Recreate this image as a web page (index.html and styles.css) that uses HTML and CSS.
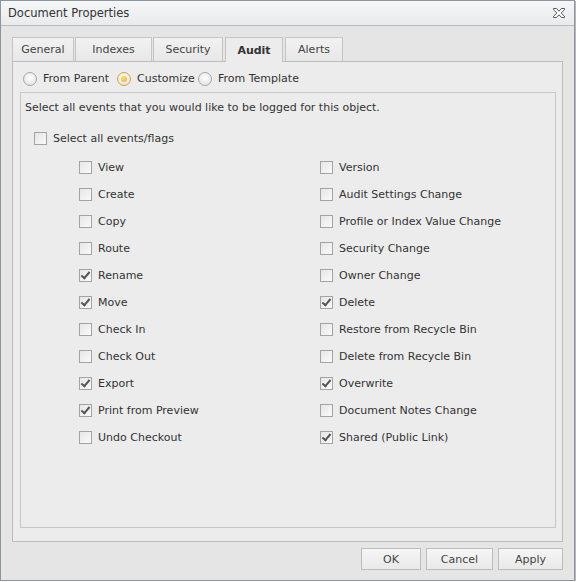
FILE: index.html
```html
<!DOCTYPE html>
<html>
<head>
<meta charset="utf-8">
<link rel="stylesheet" href="styles.css">
</head>
<body>
<div class="dialog">
  <div class="titlebar">
    <span class="title">Document Properties</span>
    <span class="close">
      <svg width="14" height="12" viewBox="0 0 14 12"><path d="M1.5 1.5h3l2.5 2.7 2.5-2.7h3v1.2l-3.4 3.3 3.4 3.3v1.2h-3L7 7.8 4.5 10.5h-3V9.3L4.9 6 1.5 2.7z" fill="#fff" stroke="#555" stroke-width="1"/></svg>
    </span>
  </div>
  <div class="body">
    <div class="tabs">
      <div class="tab t-general">General</div>
      <div class="tab t-indexes">Indexes</div>
      <div class="tab t-security">Security</div>
      <div class="tab t-audit active">Audit</div>
      <div class="tab t-alerts">Alerts</div>
    </div>
    <div class="panel">
      <div class="radios">
        <label class="radio r-parent"><span class="rb"></span>From Parent</label>
        <label class="radio r-custom"><span class="rb on"></span>Customize</label>
        <label class="radio"><span class="rb"></span>From Template</label>
      </div>
      <div class="box">
        <div class="intro">Select all events that you would like to be logged for this object.</div>
        <div class="selall"><span class="cb"></span>Select all events/flags</div>
        <div class="grid">
          <div class="item"><span class="cb"></span>View</div>
          <div class="item"><span class="cb"></span>Version</div>
          <div class="item"><span class="cb"></span>Create</div>
          <div class="item"><span class="cb"></span>Audit Settings Change</div>
          <div class="item"><span class="cb"></span>Copy</div>
          <div class="item"><span class="cb"></span>Profile or Index Value Change</div>
          <div class="item"><span class="cb"></span>Route</div>
          <div class="item"><span class="cb"></span>Security Change</div>
          <div class="item"><span class="cb checked"></span>Rename</div>
          <div class="item"><span class="cb"></span>Owner Change</div>
          <div class="item"><span class="cb checked"></span>Move</div>
          <div class="item"><span class="cb checked"></span>Delete</div>
          <div class="item"><span class="cb"></span>Check In</div>
          <div class="item"><span class="cb"></span>Restore from Recycle Bin</div>
          <div class="item"><span class="cb"></span>Check Out</div>
          <div class="item"><span class="cb"></span>Delete from Recycle Bin</div>
          <div class="item"><span class="cb checked"></span>Export</div>
          <div class="item"><span class="cb checked"></span>Overwrite</div>
          <div class="item"><span class="cb checked"></span>Print from Preview</div>
          <div class="item"><span class="cb"></span>Document Notes Change</div>
          <div class="item"><span class="cb"></span>Undo Checkout</div>
          <div class="item"><span class="cb checked"></span>Shared (Public Link)</div>
        </div>
      </div>
    </div>
    <div class="buttons">
      <button class="btn ok">OK</button>
      <button class="btn cancel">Cancel</button>
      <button class="btn apply">Apply</button>
    </div>
  </div>
</div>
</body>
</html>
```
FILE: styles.css
```css
html, body { margin: 0; padding: 0; }
body {
  font-family: "DejaVu Sans", sans-serif;
  font-size: 11px;
  color: #333;
  background: #fff;
}
.dialog {
  width: 575px;
  height: 581px;
  box-sizing: border-box;
  border: 1px solid #8e949b;
  box-shadow: 1px 1px 0 #b4b8bc;
  background: #e5e5e5;
  display: flex;
  flex-direction: column;
}
.titlebar {
  height: 24px;
  flex: none;
  border-bottom: 1px solid #b8bcc0;
  background: linear-gradient(#f5f6f7, #e9eaeb);
  display: flex;
  align-items: center;
  justify-content: space-between;
  padding: 0 8px 0 7px;
}
.title { font-size: 11.5px; color: #333; }
.close { display: flex; }
.body {
  flex: 1;
  display: flex;
  flex-direction: column;
  padding: 11px 11px 10px 11px;
}
.tabs { display: flex; gap: 1px; height: 24px; position: relative; z-index: 1; }
.tab {
  box-sizing: border-box;
  height: 24px;
  border: 1px solid #c4c4c4;
  border-bottom: none;
  background: linear-gradient(#f2f2f2, #e7e7e7);
  display: flex;
  align-items: center;
  justify-content: center;
  color: #444;
  font-size: 11px;
}
.t-general { width: 62px; }
.t-indexes { width: 77px; }
.t-security { width: 70px; }
.t-audit { width: 58px; margin-left: 1px; }
.t-alerts { width: 58px; margin-left: 1px; }
.tab.active {
  background: #ececec;
  font-weight: bold;
  height: 25px;
  margin-bottom: -1px;
  color: #333;
}
.panel {
  flex: 1;
  border: 1px solid #bcbcbc;
  background: #ececec;
  padding: 0 6px 13px 7px;
  display: flex;
  flex-direction: column;
}
.radios { display: flex; align-items: center; height: 30px; box-sizing: border-box; padding-top: 3px; margin-left: 3px; }
.radio { display: flex; align-items: center; font-size: 11px; }
.r-parent { width: 94px; }
.r-custom { width: 81px; }
.rb {
  width: 14px; height: 14px; box-sizing: border-box;
  border-radius: 50%;
  border: 1px solid #a8a8a8;
  background: radial-gradient(circle at 50% 40%, #ffffff, #dcdcdc);
  margin-right: 6px;
  display: inline-block;
  position: relative;
}
.rb.on { border-color: #d8a040; }
.rb.on::after {
  content: ""; position: absolute; left: 3px; top: 3px;
  width: 6px; height: 6px; border-radius: 50%;
  background: radial-gradient(circle at 40% 35%, #ffe080, #f0a810);
}
.box {
  flex: 1;
  border: 1px solid #c6c6c6;
  padding: 8px 4px 7px 4px;
}
.intro { font-size: 11px; height: 14px; line-height: 14px; }
.selall { display: flex; align-items: center; font-size: 11px; margin: 16px 0 0 9px; height: 14px; }
.cb {
  width: 13px; height: 13px; box-sizing: border-box;
  border: 1px solid #a3a3a3;
  background: linear-gradient(135deg, #e6e6e6, #fafafa);
  margin-right: 6px;
  display: inline-block;
  flex: none;
  position: relative;
}
.cb.checked::after {
  content: "";
  position: absolute;
  left: 3px; top: 0px;
  width: 3px; height: 7px;
  border: solid #555;
  border-width: 0 2px 2px 0;
  transform: rotate(40deg);
}
.grid {
  display: grid;
  grid-template-columns: 241px 1fr;
  margin: 15px 0 0 54px;
  row-gap: 13px;
}
.item { display: flex; align-items: center; height: 14px; font-size: 11px; }
.buttons {
  display: flex;
  justify-content: flex-end;
  gap: 5px;
  margin-top: 6px;
}
.btn {
  height: 22px;
  border: 1px solid #bcbcbc;
  background: linear-gradient(#f6f6f6, #e9e9e9);
  font-family: inherit;
  font-size: 11px;
  color: #444;
  padding: 0;
}
.ok { width: 60px; }
.cancel { width: 67px; }
.apply { width: 65px; }
```
